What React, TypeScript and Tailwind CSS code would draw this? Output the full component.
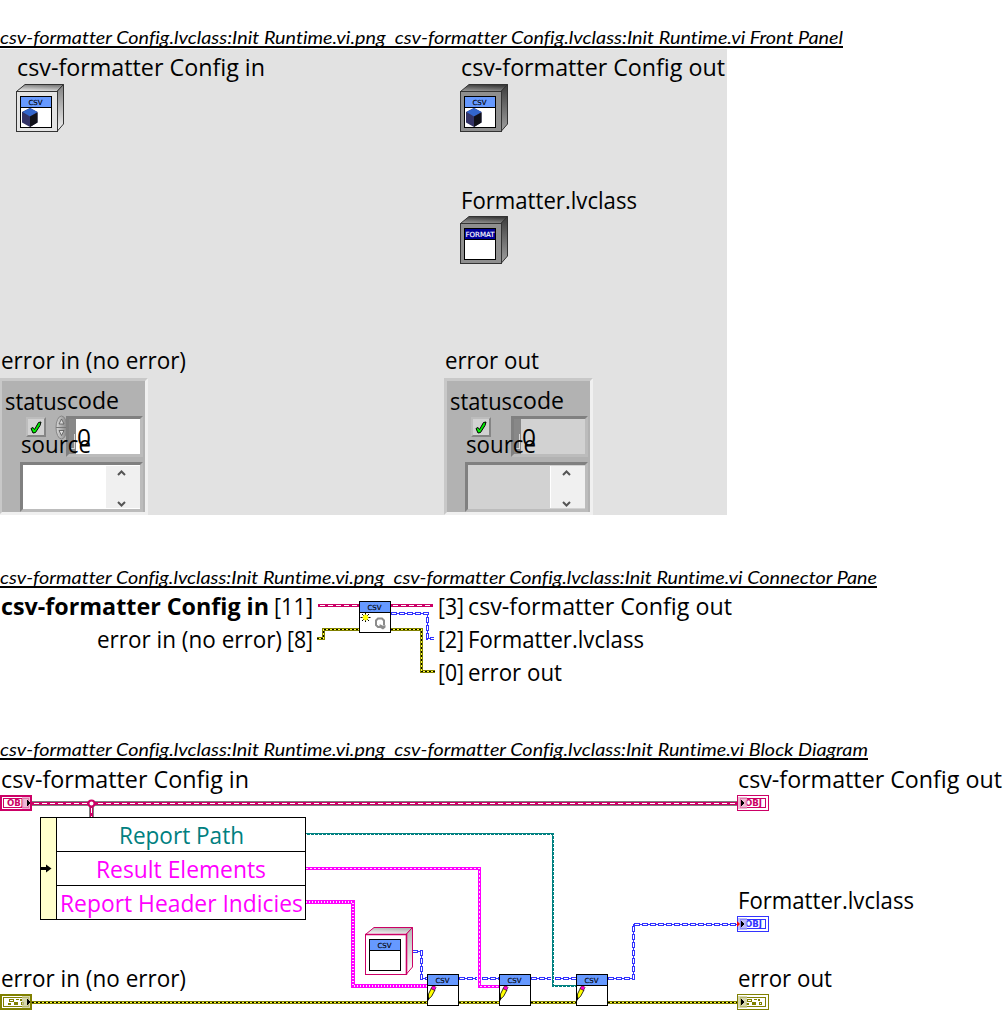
import React, { useLayoutEffect, useRef } from "react";

const SANS = "font-['Open_Sans','Noto_Sans',sans-serif]";

/* Text condensed horizontally so that it fills the given width. */
function Fit({ width, children, className = "leading-8" }: { width: number; children: React.ReactNode; className?: string }) {
  const ref = useRef<HTMLSpanElement>(null);
  useLayoutEffect(() => {
    const el = ref.current;
    if (!el) return;
    const fit = () => {
      el.style.transform = "none";
      el.style.transform = `scaleX(${width / el.getBoundingClientRect().width})`;
    };
    fit();
    document.fonts.ready.then(fit);
  }, [width]);
  return (
    <span className={`block h-8 shrink-0 ${className}`} style={{ width }}>
      <span ref={ref} className="inline-block origin-left whitespace-nowrap">
        {children}
      </span>
    </span>
  );
}

function Caption({ width, children }: { width: number; children: string }) {
  return (
    <h2
      className="h-[21px] overflow-hidden border-b-2 border-black font-[Lato,sans-serif] text-[17px] font-normal italic [font-variant-ligatures:none]"
      style={{ width }}
    >
      <Fit width={width} className="-mt-[5px] leading-8">
        <span className="whitespace-pre">{children}</span>
      </Fit>
    </h2>
  );
}

function PixelText({ x, y, w, fill = "#000", children }: { x: number; y: number; w: number; fill?: string; children: string }) {
  return (
    <text x={x} y={y} textLength={w} lengthAdjust="spacingAndGlyphs" fill={fill} stroke={fill} strokeWidth=".15" fontSize="7" fontFamily="DejaVu Sans, sans-serif">
      {children}
    </text>
  );
}

type Glyph = "cube" | "pencil" | "init" | "none";

/* 32 x 32 VI or class icon, drawn at (x, y). */
function IconFace({ x = 0, y = 0, title = "CSV", glyph }: { x?: number; y?: number; title?: "CSV" | "FORMAT"; glyph: Glyph }) {
  return (
    <g transform={`translate(${x} ${y})`}>
      <g shapeRendering="crispEdges">
        <rect width="32" height="32" fill="#000" />
        <rect x="1" y="1" width="30" height="10" fill={title === "CSV" ? "#6699ff" : "#000099"} />
        <rect x="1" y="12" width="30" height="19" fill="#fff" />
      </g>
      {title === "CSV" ? (
        <PixelText x={8.5} y={8.5} w={14}>CSV</PixelText>
      ) : (
        <PixelText x={1.5} y={8.5} w={29} fill="#fff">FORMAT</PixelText>
      )}
      {glyph === "cube" && (
        <g>
          <path d="M10 12l7.5 4v10.500L10 31l-8-4.500V16z" fill="#333366" />
          <path d="M10 12l7.500 4L10 20.500 2.500 16z" fill="#3366cc" />
          <path d="M10 20.500L17.500 16.500v10L10 31z" fill="#111118" />
        </g>
      )}
      {glyph === "pencil" && (
        <g>
          <path d="M4.500 14l3.500 2L4.500 22.500 1.500 25V20z" fill="#ffff00" stroke="#000" strokeWidth=".8" />
          <path d="M5.500 12h2L9 13.500 7.500 16.500 4 14.500z" fill="#ff00cc" stroke="#000" strokeWidth=".5" />
          <path d="M1 23l1.500 1.500L1 27z" fill="#000" />
        </g>
      )}
      {glyph === "init" && (
        <g>
          <path d="M6.500 12v9M1.500 16.500h10M3 13l7 7M10 13l-7 7" stroke="#000" strokeWidth="1" />
          <path d="M6.500 13.500v6M3.500 16.500h6M4.500 14.500l4 4M8.500 14.500l-4 4" stroke="#ffff00" strokeWidth="1.600" />
          <path d="M21 26h-2l-2-2v-4.500l2-2h4l2 2v5" stroke="#8c8c8c" strokeWidth="2" fill="none" />
          <path d="M20.500 23.500h1l3 1.500 2-1v2.500L24 28.500l-3.500-2z" fill="#8c8c8c" />
        </g>
      )}
    </g>
  );
}

function Vi({ glyph, className }: { glyph: Glyph; className: string }) {
  return (
    <svg className={`absolute ${className}`} width="32" height="32">
      <IconFace glyph={glyph} />
    </svg>
  );
}

type Tone = "light" | "dark" | "pink";

/* Class object: an icon set in the front face of a box. */
function ClassBox({ tone, title, glyph, className }: { tone: Tone; title?: "CSV" | "FORMAT"; glyph: Glyph; className: string }) {
  const face = { light: "#e4e4e4", dark: "#8f8f8f", pink: "#ffffff" }[tone];
  const line = { light: "#333333", dark: "#333333", pink: "#cc0066" }[tone];
  const from = { light: "#f4f4f4", dark: "#a0a0a0", pink: "#ffffff" }[tone];
  const to = { light: "#808080", dark: "#3c3c3c", pink: "#b4b4b4" }[tone];
  const id = `shade-${tone}`;
  return (
    <svg className={`shrink-0 ${className}`} width="48" height="48">
      <defs>
        <linearGradient id={id} x1="0" y1="1" x2=".3" y2="0">
          <stop offset="0" stopColor={from} />
          <stop offset="1" stopColor={to} />
        </linearGradient>
        <linearGradient id={`${id}-side`} x1="0" y1="1" x2="0" y2="0">
          <stop offset="0" stopColor={from} />
          <stop offset="1" stopColor={to} />
        </linearGradient>
      </defs>
      <path d="M.5 7.500L9 .5h38.500l-6.500 7z" fill={`url(#${id})`} stroke={line} />
      <path d="M41 7.500L47.500.5v39.500l-6.500 7.500z" fill={`url(#${id}-side)`} stroke={line} />
      <rect x=".5" y="7.500" width="41" height="40" fill={face} stroke={line} />
      {tone === "pink" && <path d="M0 7.500h41.500v40" fill="none" stroke={line} strokeWidth="1.600" />}
      <IconFace x={4} y={12} title={title} glyph={glyph} />
    </svg>
  );
}

/* Block diagram terminal for a control (arrow right) or an indicator (arrow left). */
function Terminal({ kind, color, tint, label }: { kind: "control" | "indicator"; color: string; tint: string; label: "OBJ" | "cluster" }) {
  const control = kind === "control";
  const ox = control ? 7 : 8;
  return (
    <svg className="shrink-0" width="32" height="16">
      <g shapeRendering="crispEdges">
        <rect width="32" height="16" fill={color} />
        {control ? <rect x="2" y="2" width="28" height="12" fill="#fff" /> : <rect x="1" y="1" width="30" height="14" fill="#fff" />}
        <rect x="3.500" y="3.500" width="25" height="9" fill="#fff" stroke={color} />
      </g>
      {label === "OBJ" ? (
        <text x={ox} y="10.800" textLength="17" lengthAdjust="spacingAndGlyphs" fill={color} fontSize="8" fontWeight="700" fontFamily="DejaVu Sans, sans-serif">
          OBJ
        </text>
      ) : (
        <g fill={color} shapeRendering="crispEdges">
          <path d={`M${ox + 2} 5h5v3h-5zM${ox + 9} 5h3v1h-3zM${ox + 13} 5h2v2h-2zM${ox + 1} 9h3v2h-3zM${ox + 7} 8h4v3h-4zM${ox + 14} 8h3v3h-3z`} />
          <path d={`M${ox + 3} 6h3v1h-3zM${ox + 15} 9h1v1h-1z`} fill="#fff" />
        </g>
      )}
      <g shapeRendering="crispEdges">
        {control ? (
          <>
            <rect x="22" y="2" width="8" height="12" fill={tint} opacity=".75" />
            <path d="M27 5h1v1h1v1h1v2h-1v1h-1v1h-1z" fill="#000" />
          </>
        ) : (
          <>
            <rect x="1" y="2" width="9" height="12" fill={tint} opacity=".75" />
            <path d="M4 5h1v1h1v1h1v2h-1v1h-1v1h-1z" fill="#000" />
          </>
        )}
      </g>
    </svg>
  );
}

/* Wire styles */
const ErrorWire = ({ d }: { d: string }) => (
  <g fill="none" shapeRendering="crispEdges">
    <path d={d} stroke="#808000" strokeWidth="3" />
    <path d={d} stroke="#ffff33" strokeWidth="1" />
    <path d={d} stroke="#000" strokeWidth="1" strokeDasharray="2 2" />
  </g>
);
const BlueWire = ({ d }: { d: string }) => (
  <g fill="none" shapeRendering="crispEdges">
    <path d={d} stroke="#3333ff" strokeWidth="1" />
    <path d={d} stroke="#3333ff" strokeWidth="3" strokeDasharray="6 2" />
    <path d={d} stroke="#fff" strokeWidth="1" strokeDasharray="4 4" strokeDashoffset="-1" />
  </g>
);
const ClassWire = ({ d, cased }: { d: string; cased?: boolean }) => (
  <g fill="none" shapeRendering="crispEdges">
    {cased && <path d={d} stroke="#808080" strokeWidth="5" />}
    <path d={d} stroke="#cc0066" strokeWidth="3" />
    <path d={d} stroke="#fff" strokeWidth="1" strokeDasharray="5 3" strokeDashoffset="-2" />
  </g>
);
const StringWire = ({ d, wide }: { d: string; wide?: boolean }) => (
  <g fill="none" shapeRendering="crispEdges">
    <path d={d} stroke="#ff00ff" strokeWidth={wide ? 4 : 3} />
    <path d={d} stroke="#fff" strokeWidth={wide ? 2 : 1} strokeDasharray={wide ? "1 2" : "2 2"} strokeOpacity=".85" />
  </g>
);

const Chevron = ({ up }: { up?: boolean }) => (
  <svg width="9" height="6" fill="none">
    <path d={up ? "M1 5l3.500-3.500L8 5" : "M1 1l3.500 3.500L8 1"} stroke="#555" strokeWidth="2" />
  </svg>
);

const sunken = "border-[3px] border-t-[#808080] border-l-[#808080] border-b-[#bcbcbc] border-r-[#bcbcbc]";

function ErrorCluster({ indicator }: { indicator?: boolean }) {
  const field = indicator ? "bg-[#d2d2d2]" : "bg-white";
  return (
    <div className="relative -ml-px mt-[2px] h-[137px] w-[149px] border-[3px] border-t-[#c8c8c8] border-r-[#f0f0f0] border-b-[#f0f0f0] border-l-[#c8c8c8] bg-[#b2b2b2]">
      <div className="flex h-[81px] items-start pt-[35px] pl-6">
        <div className="mt-px flex size-5 items-center justify-center border-2 border-t-[#bdbdbd] border-r-[#858585] border-b-[#858585] border-l-[#bdbdbd] bg-[#d2d2d2]">
          <svg width="13" height="13">
            <path d="M1 7.500l2-1 1.500 2L8.500 1.500l2.500-.5-1 3.500L5.500 11.500 3 12z" fill="#00ee00" stroke="#000" />
          </svg>
        </div>
        <div className="-mt-px ml-[9px] w-[11px]">
          {!indicator && (
            <svg width="13" height="25">
              <defs>
                <linearGradient id="spin">
                  <stop offset="0" stopColor="#d8d8d8" />
                  <stop offset="1" stopColor="#858585" />
                </linearGradient>
              </defs>
              <ellipse cx="6.500" cy="12.500" rx="5.500" ry="11.500" fill="url(#spin)" stroke="#858585" />
              <path d="M1 12.500h11" stroke="#777" />
              <path d="M4 9l2.500-5L9 9zM4 15.500h5l-2.500 5z" fill="#ddd" stroke="#555" strokeWidth=".8" />
            </svg>
          )}
        </div>
        <div className={`flex h-[41px] w-[77px] ${sunken}`}>
          <span className="flex w-[7px] items-end justify-center bg-[#888] pb-[5px]">
            <span className="h-[15px] w-1 border-r border-b border-[#d8d8d8]" />
          </span>
          <span className={`flex-1 ${field}`} />
        </div>
      </div>
      <div className={`ml-[18px] flex h-[50px] w-[123px] ${sunken} ${field}`}>
        <span className="flex-1" />
        <div className="my-px flex w-[35px] flex-col items-center justify-between border-l border-white bg-[#f0f0f0] pt-1 pr-[3px] pb-px">
          <Chevron up />
          <Chevron />
        </div>
      </div>
      <div className="absolute top-[3px] left-[3px] flex">
        <Fit width={62} className="leading-[33px]">status</Fit>
        <Fit width={52}>code</Fit>
      </div>
      <Fit width={14} className="absolute top-[40px] left-[75px] leading-8">0</Fit>
      <Fit width={70} className="absolute top-[47px] left-[19px] leading-8">source</Fit>
    </div>
  );
}

function FrontPanel() {
  return (
    <div className="mt-px flex h-[466px] w-[727px] overflow-hidden bg-[#e2e2e2]">
      <div className="flex w-[445px] flex-col justify-between pt-[2px]">
        <div className="flex flex-col gap-px pl-[17px]">
          <Fit width={248}>csv-formatter Config in</Fit>
          <ClassBox tone="light" glyph="cube" className="-ml-px" />
        </div>
        <div>
          <div className="pl-px"><Fit width={185}>error in (no error)</Fit></div>
          <ErrorCluster />
        </div>
      </div>
      <div className="flex flex-col justify-between pt-[2px]">
        <div className="flex flex-col pl-4">
          <Fit width={264}>csv-formatter Config out</Fit>
          <ClassBox tone="dark" glyph="cube" className="-ml-px mt-px" />
          <div className="mt-[52px]"><Fit width={176}>Formatter.lvclass</Fit></div>
          <ClassBox tone="dark" title="FORMAT" glyph="none" className="-ml-px" />
        </div>
        <div>
          <Fit width={94}>error out</Fit>
          <ErrorCluster indicator />
        </div>
      </div>
    </div>
  );
}

function ConnectorPane() {
  return (
    <div className="relative flex pt-[2px]">
      <div className="w-[313px] space-y-px">
        <div className="flex justify-end gap-[5px]">
          <Fit width={268} className="leading-8 font-bold">csv-formatter Config in</Fit>
          <Fit width={39}>[11]</Fit>
        </div>
        <div className="flex justify-end gap-[5px]">
          <Fit width={185}>error in (no error)</Fit>
          <Fit width={26}>[8]</Fit>
        </div>
      </div>
      <svg className="ml-1 shrink-0" width="121" height="99" viewBox="317 590 121 99">
        <ClassWire d="M318 605.500H359" />
        <ClassWire d="M391 605.500H433" />
        <BlueWire d="M391 613.500H427.500V638.500H434" />
        <ErrorWire d="M317 638.500H323.500V629.500H359" />
        <ErrorWire d="M391 629.500H421.500V671.500H435" />
      </svg>
      <div className="space-y-px">
        {[
          { index: "[3]", name: "csv-formatter Config out", width: 264 },
          { index: "[2]", name: "Formatter.lvclass", width: 176 },
          { index: "[0]", name: "error out", width: 94 },
        ].map((row) => (
          <div key={row.index} className="flex gap-1">
            <Fit width={26}>{row.index}</Fit>
            <Fit width={row.width}>{row.name}</Fit>
          </div>
        ))}
      </div>
      <Vi glyph="init" className="top-[13px] left-[359px]" />
    </div>
  );
}

function BlockDiagram() {
  return (
    <div className="relative flex h-[275px] w-[1004px] justify-between pt-[3px]">
      <svg className="absolute inset-0" width="1004" height="275" viewBox="0 760 1004 275">
        <ClassWire cased d="M32 803.500H738" />
        <ClassWire cased d="M91.500 806V817" />
        <circle cx="91.500" cy="803.500" r="3" fill="#fff" stroke="#cc0066" strokeWidth="2" />
        <BlueWire d="M412 951.500H421.500V978.500H427" />
        <BlueWire d="M459 978.500H477" />
        <BlueWire d="M482 978.500H499" />
        <BlueWire d="M531 978.500H551" />
        <BlueWire d="M555 978.500H576" />
        <BlueWire d="M608 978.500H633.500V924.500H737" />
        <g fill="none" stroke="#008080" shapeRendering="crispEdges">
          <path d="M306 834H553V986H576" strokeWidth="2" />
          <path d="M306 834.500H553.500V986.500H576" stroke="#fff" strokeWidth="1" strokeDasharray="1 3" />
        </g>
        <StringWire d="M306 868.500H479.500V986.500H499" />
        <StringWire wide d="M306 902H353V986H427" />
        <ErrorWire d="M32 1002.500H427" />
        <ErrorWire d="M459 1002.500H499" />
        <ErrorWire d="M531 1002.500H576" />
        <ErrorWire d="M608 1002.500H738" />
      </svg>

      <div className="relative flex flex-col">
        <div className="pl-px"><Fit width={248}>csv-formatter Config in</Fit></div>
        <Terminal kind="control" label="OBJ" color="#cc0066" tint="#e8a0c4" />
        <div className="mt-[6px] ml-10 flex h-[103px] w-[266px] border border-black bg-white">
          <div className="flex w-4 items-center border-r border-black bg-[#ffffcc]">
            <svg width="11" height="9">
              <path d="M0 3h5V0.500L10.500 4.500 5 8.500V6H0z" />
            </svg>
          </div>
          <div className="flex flex-1 flex-col divide-y divide-black leading-[33px]">
            <div className="flex h-[34px] justify-center text-[#008080]"><Fit width={125} className="">Report Path</Fit></div>
            <div className="flex h-[34px] justify-center text-[#ff00ff]"><Fit width={170} className="">Result Elements</Fit></div>
            <div className="flex h-[33px] justify-center text-[#ff00ff]"><Fit width={243} className="">Report Header Indicies</Fit></div>
          </div>
        </div>
        <div className="mt-[42px] pl-px"><Fit width={185}>error in (no error)</Fit></div>
        <Terminal kind="control" label="cluster" color="#808000" tint="#c8c890" />
      </div>

      <div className="relative flex w-[267px] flex-col">
        <div className="pl-px"><Fit width={264}>csv-formatter Config out</Fit></div>
        <Terminal kind="indicator" label="OBJ" color="#cc0066" tint="#e8a0c4" />
        <div className="mt-[73px] pl-px"><Fit width={176}>Formatter.lvclass</Fit></div>
        <Terminal kind="indicator" label="OBJ" color="#3333ff" tint="#a8a8f4" />
        <div className="mt-[30px] pl-px"><Fit width={94}>error out</Fit></div>
        <Terminal kind="indicator" label="cluster" color="#808000" tint="#c8c890" />
      </div>

      <ClassBox tone="pink" glyph="none" className="absolute top-[167px] left-[365px]" />
      <Vi glyph="pencil" className="top-[214px] left-[427px]" />
      <Vi glyph="pencil" className="top-[214px] left-[499px]" />
      <Vi glyph="pencil" className="top-[214px] left-[576px]" />
      <svg className="absolute top-[161px] left-[737px]" width="4" height="6">
        <path d="M0 0l3 3-3 3z" fill="#f00" />
      </svg>
    </div>
  );
}

export default function App() {
  const file = "csv-formatter Config.lvclass:Init Runtime.vi";
  return (
    <main className={`h-[1035px] w-[1004px] overflow-hidden bg-white text-2xl text-black ${SANS}`}>
      <section className="h-[567px] pt-[27px]">
        <Caption width={843}>{`${file}.png  ${file} Front Panel`}</Caption>
        <FrontPanel />
      </section>
      <section className="h-[172px]">
        <Caption width={877}>{`${file}.png  ${file} Connector Pane`}</Caption>
        <ConnectorPane />
      </section>
      <section>
        <Caption width={868}>{`${file}.png  ${file} Block Diagram`}</Caption>
        <BlockDiagram />
      </section>
    </main>
  );
}
